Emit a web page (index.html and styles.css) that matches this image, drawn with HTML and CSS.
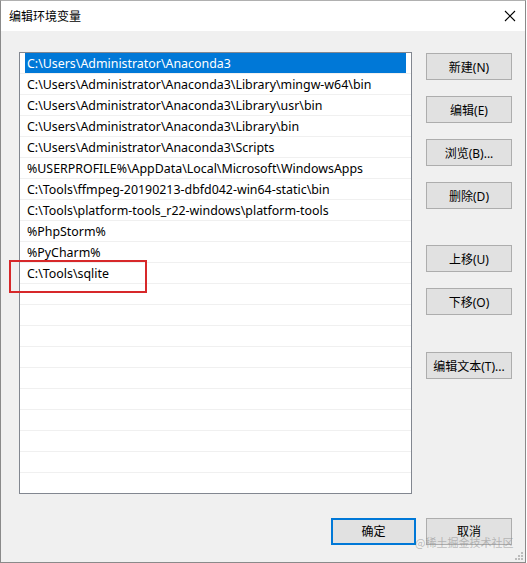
FILE: index.html
```html
<!DOCTYPE html>
<html lang="zh-CN">
<head>
  <meta charset="UTF-8" />
  <title>编辑环境变量</title>
  <link rel="stylesheet" href="styles.css">
</head>
<body>
  <div class="window">
    <div class="titlebar">
      <span class="title">编辑环境变量</span>
      <svg class="close" width="12" height="12" viewBox="0 0 12 12">
        <path d="M1 1 L11 11 M11 1 L1 11" stroke="#000" stroke-width="1.1" fill="none"/>
      </svg>
    </div>

    <div class="dialog">
      <div class="main">
        <div class="listbox" id="path-list"></div>

        <div class="side-buttons">
          <button type="button">新建(N)</button>
          <button type="button">编辑(E)</button>
          <button type="button">浏览(B)...</button>
          <button type="button">删除(D)</button>
          <button type="button" class="move-up">上移(U)</button>
          <button type="button">下移(O)</button>
          <button type="button" class="edit-text">编辑文本(T)...</button>
        </div>
      </div>

      <div class="footer">
        <button type="button" class="default-btn">确定</button>
        <button type="button">取消</button>
      </div>
    </div>

    <div class="highlight"></div>
    <div class="watermark">@稀土掘金技术社区</div>
    <svg class="grip" width="8" height="8" viewBox="0 0 8 8">
      <rect x="6" y="0" width="2" height="2" fill="#bcbcbc"/>
      <rect x="3" y="3" width="2" height="2" fill="#bcbcbc"/>
      <rect x="6" y="3" width="2" height="2" fill="#bcbcbc"/>
      <rect x="0" y="6" width="2" height="2" fill="#bcbcbc"/>
      <rect x="3" y="6" width="2" height="2" fill="#bcbcbc"/>
      <rect x="6" y="6" width="2" height="2" fill="#bcbcbc"/>
    </svg>
  </div>

  <script>
    const paths = [
      'C:\\Users\\Administrator\\Anaconda3',
      'C:\\Users\\Administrator\\Anaconda3\\Library\\mingw-w64\\bin',
      'C:\\Users\\Administrator\\Anaconda3\\Library\\usr\\bin',
      'C:\\Users\\Administrator\\Anaconda3\\Library\\bin',
      'C:\\Users\\Administrator\\Anaconda3\\Scripts',
      '%USERPROFILE%\\AppData\\Local\\Microsoft\\WindowsApps',
      'C:\\Tools\\ffmpeg-20190213-dbfd042-win64-static\\bin',
      'C:\\Tools\\platform-tools_r22-windows\\platform-tools',
      '%PhpStorm%',
      '%PyCharm%',
      'C:\\Tools\\sqlite'
    ];

    const list = document.getElementById('path-list');
    for (let i = 0; i < 21; i++) {
      const row = document.createElement('div');
      row.className = 'row';
      if (i === 0) row.classList.add('selected');

      const text = document.createElement('div');
      text.className = 'row-text';
      text.textContent = paths[i] || '';

      row.appendChild(text);
      list.appendChild(row);
    }
  </script>
</body>
</html>
```

FILE: styles.css
```css
body {
  margin: 0;
  padding: 0;
  background-color: #ffffff;
  font-family: "Noto Sans", "Noto Sans CJK SC", sans-serif;
  font-size: 12px;
  color: #000;
}

.window {
  position: relative;
  width: 526px;
  height: 563px;
  box-sizing: border-box;
  border: 1px solid #8a8a8a;
  border-top-color: #b0b0b0;
  display: flex;
  flex-direction: column;
  overflow: hidden;
}

.titlebar {
  height: 30px;
  background-color: #ffffff;
  display: flex;
  align-items: center;
  justify-content: space-between;
  padding: 0 8px;
  flex-shrink: 0;
}

.title {
  font-family: "Noto Sans CJK SC", sans-serif;
  font-size: 12px;
  margin-top: -2px;
}

.close {
  margin-right: 1px;
}

.dialog {
  flex: 1;
  background-color: #f0f0f0;
  padding: 21px 12px 0 18px;
}

.main {
  display: flex;
  gap: 14px;
}

.listbox {
  width: 393px;
  height: 442px;
  box-sizing: border-box;
  border: 1px solid #828790;
  background-color: #ffffff;
  overflow: hidden;
}

.row {
  height: 20px;
  border-bottom: 1px solid #f0f0f0;
  padding: 0 5px;
}

.row-text {
  height: 20px;
  line-height: 22px;
  padding-left: 2px;
  font-size: 12.4px;
  white-space: nowrap;
}

.row.selected .row-text {
  background-color: #0078d7;
  color: #ffffff;
}

.side-buttons {
  display: flex;
  flex-direction: column;
  gap: 16px;
  padding-top: 1px;
}

button {
  width: 86px;
  height: 27px;
  box-sizing: border-box;
  background-color: #e1e1e1;
  border: 1px solid #adadad;
  font-family: "Noto Sans", "Noto Sans CJK SC", sans-serif;
  font-size: 12px;
  color: #000;
  padding: 0;
}

.move-up {
  margin-top: 20px;
}

.edit-text {
  margin-top: 21px;
}

.footer {
  display: flex;
  justify-content: flex-end;
  gap: 10px;
  margin-top: 24px;
  padding-right: 1px;
}

.footer button {
  padding-bottom: 2px;
}

.default-btn {
  width: 85px;
  border: 2px solid #0078d7;
}

.highlight {
  position: absolute;
  left: 8px;
  top: 259px;
  width: 138px;
  height: 33px;
  box-sizing: border-box;
  border: 2px solid #d7282a;
}

.watermark {
  position: absolute;
  left: 414px;
  top: 535px;
  font-family: "Noto Sans CJK SC", sans-serif;
  font-size: 11px;
  line-height: 13px;
  color: rgba(140, 140, 140, 0.55);
}

.grip {
  position: absolute;
  right: 2px;
  bottom: 2px;
}
```
